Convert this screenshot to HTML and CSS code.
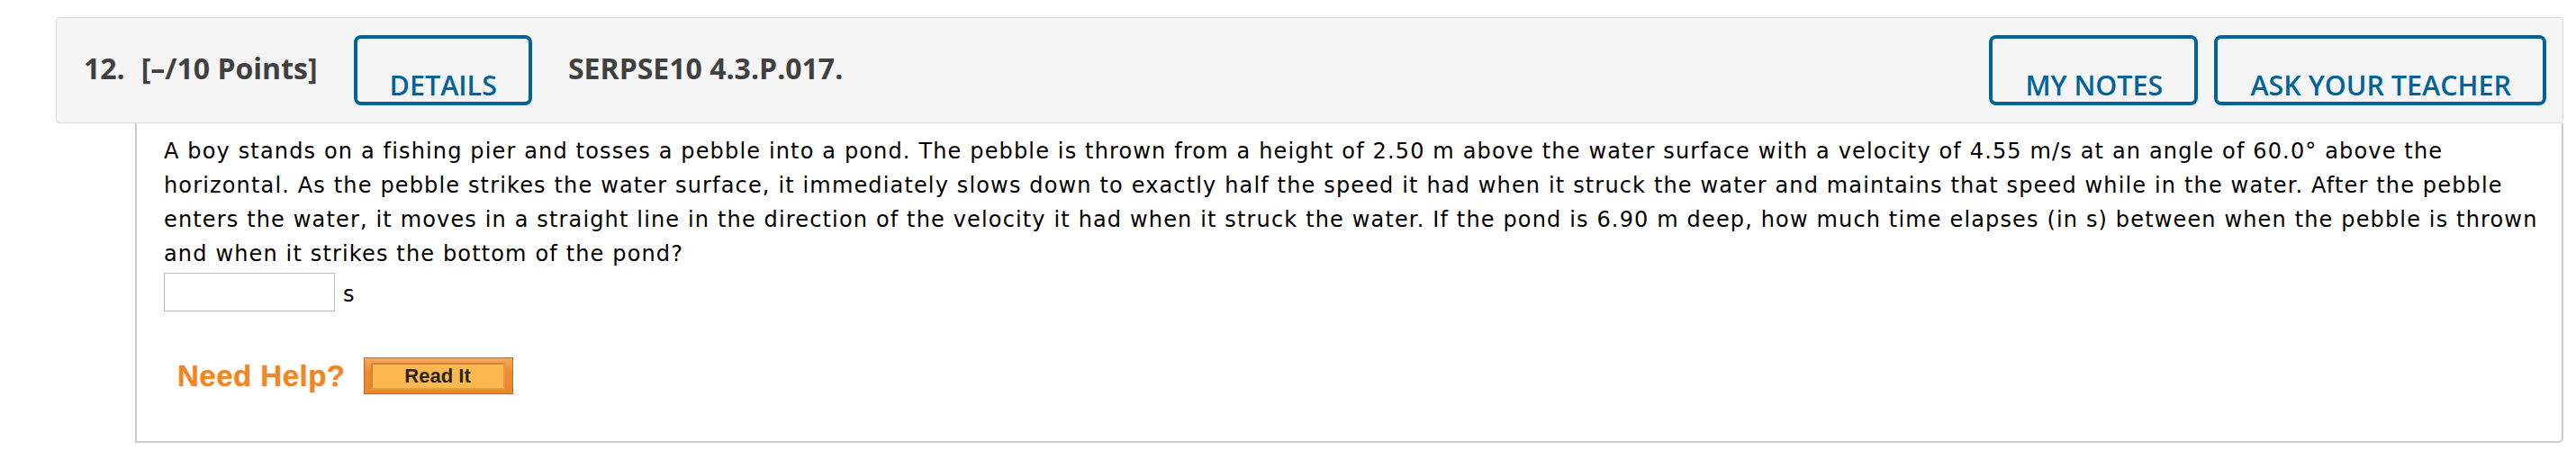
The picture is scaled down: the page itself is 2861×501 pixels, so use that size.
FILE: index.html
```html
<!DOCTYPE html>
<html lang="en">
<head>
<meta charset="utf-8">
<title>Question 12</title>
<link rel="stylesheet" href="styles.css">
</head>
<body>
<div class="question">
  <div class="q-header">
    <span class="q-num">12.</span>
    <span class="q-points">[–/10 Points]</span>
    <button class="btn btn-details">DETAILS</button>
    <span class="q-code">SERPSE10 4.3.P.017.</span>
    <span class="spacer"></span>
    <button class="btn">MY NOTES</button>
    <button class="btn btn-ask">ASK YOUR TEACHER</button>
  </div>
  <div class="q-body">
    <p class="q-text">A boy stands on a fishing pier and tosses a pebble into a pond. The pebble is thrown from a height of 2.50 m above the water surface with a velocity of 4.55 m/s at an angle of 60.0° above the<br>
    horizontal. As the pebble strikes the water surface, it immediately slows down to exactly half the speed it had when it struck the water and maintains that speed while in the water. After the pebble<br>
    enters the water, it moves in a straight line in the direction of the velocity it had when it struck the water. If the pond is 6.90 m deep, how much time elapses (in s) between when the pebble is thrown<br>
    and when it strikes the bottom of the pond?</p>
    <div class="answer">
      <input class="answer-input" type="text" aria-label="answer">
      <span class="unit">s</span>
    </div>
    <div class="help">
      <span class="need-help">Need Help?</span>
      <button class="read-it"><span class="read-it-inner">Read It</span></button>
    </div>
  </div>
</div>
</body>
</html>
```
FILE: styles.css
```css
html, body {
  margin: 0;
  padding: 0;
  background: #ffffff;
}

.question {
  margin: 19px 0 0 62px;
  width: 2785px;
}

.q-header {
  box-sizing: border-box;
  height: 118px;
  display: flex;
  align-items: center;
  padding: 0 18px 0 30px;
  background: #f5f5f5;
  border: 1px solid #dcdcdc;
  border-radius: 4px;
  font-family: "Open Sans", "Liberation Sans", sans-serif;
}

.q-num,
.q-points,
.q-code {
  font-size: 32px;
  font-weight: 700;
  color: #404040;
  line-height: 44px;
  margin-bottom: 4px;
}

.q-num {
  margin-right: 18px;
}

.q-points {
  margin-right: 40px;
}

.q-code {
  margin-left: 40px;
}

.spacer {
  flex: 1;
}

.btn {
  box-sizing: border-box;
  height: 78px;
  padding: 31px 35px 0 36px;
  margin: 0;
  border: 4px solid #006399;
  border-radius: 8px;
  background: transparent;
  color: #006399;
  font-family: "Open Sans", "Liberation Sans", sans-serif;
  font-size: 30.5px;
  font-weight: 600;
  line-height: 32px;
  text-align: left;
  white-space: nowrap;
}

.btn-ask {
  margin-left: 18px;
}

.q-body {
  box-sizing: border-box;
  margin-left: 88px;
  height: 355px;
  border-left: 2px solid #cccccc;
  border-right: 2px solid #cccccc;
  border-bottom: 2px solid #cccccc;
  border-bottom-right-radius: 6px;
  padding: 12px 12px 0 30px;
}

.q-text {
  margin: 0;
  font-family: "DejaVu Sans", Verdana, sans-serif;
  font-size: 24px;
  letter-spacing: 1.15px;
  line-height: 38px;
  color: #000000;
}

.answer {
  display: flex;
  align-items: center;
  margin-top: 2px;
}

.answer-input {
  box-sizing: border-box;
  width: 190px;
  height: 43px;
  margin: 0;
  border: 1px solid #bdbdbd;
  background: #ffffff;
}

.unit {
  margin-left: 9px;
  margin-top: 5px;
  font-family: "DejaVu Sans", Verdana, sans-serif;
  font-size: 24px;
  color: #000000;
}

.help {
  display: flex;
  align-items: center;
  margin-top: 51px;
  padding-left: 15px;
}

.need-help {
  font-family: "Liberation Sans", Arial, sans-serif;
  font-weight: 700;
  font-size: 33px;
  letter-spacing: 0.5px;
  color: #f08523;
  text-shadow: 0 0 2px rgba(245, 150, 60, 0.55);
  margin-right: 20px;
}

.read-it {
  box-sizing: border-box;
  width: 166px;
  height: 41px;
  margin: 0;
  padding: 5px 8px 4px 7px;
  border: 1px solid #b86f2c;
  background: linear-gradient(#f8a85f, #f08b2b 40%, #ee8626);
  display: flex;
}

.read-it-inner {
  box-sizing: border-box;
  flex: 1;
  display: flex;
  align-items: center;
  justify-content: center;
  background: #fdb94f;
  border: 2px solid #d0853a;
  border-bottom-color: #e59a48;
  border-right-color: #e59a48;
  font-family: "Liberation Sans", Arial, sans-serif;
  font-weight: 700;
  font-size: 22px;
  color: #2a2415;
}
```
